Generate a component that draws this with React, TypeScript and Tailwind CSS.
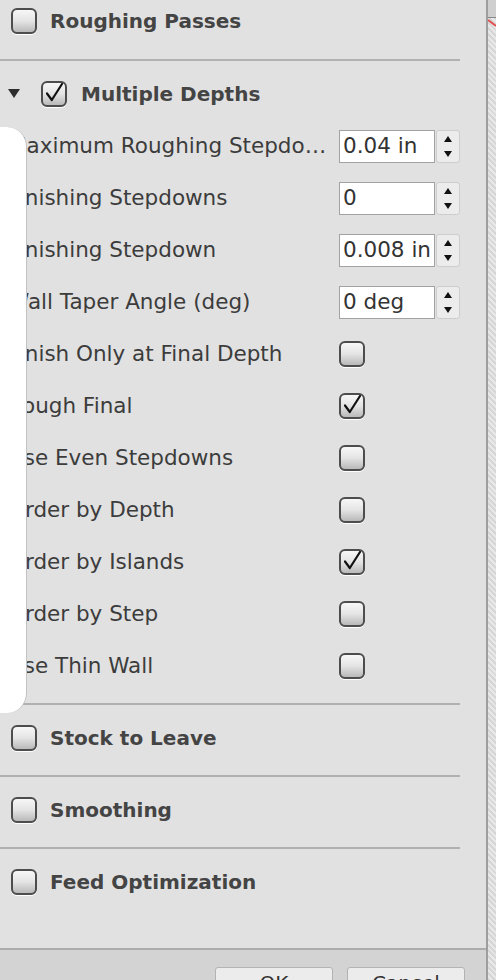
import { ReactNode } from 'react';

function Check({ checked = false }: { checked?: boolean }) {
  return (
    <span className="relative flex h-[26px] w-[26px] shrink-0 items-center justify-center rounded-[6px] border-2 border-[#4d4d4d] bg-linear-to-b from-[#f7f7f7] via-[#e4e4e4] to-[#b9b9b9] shadow-[0_1px_0_#ffffff]">
      {checked && (
        <svg viewBox="0 0 26 26" className="absolute left-[-2px] top-[-3px] h-[26px] w-[26px] overflow-visible">
          <path d="M6 13.5 L10.8 20 L21 4" fill="none" stroke="#111" strokeWidth="2.2" strokeLinecap="round" strokeLinejoin="round" />
        </svg>
      )}
    </span>
  );
}

function Line() {
  return <div className="h-[2px] w-[460px] shrink-0 bg-[#b1b1b1]" />;
}

function Spinner({ value }: { value: string }) {
  return (
    <div className="flex items-center gap-[1px]">
      <div className="flex h-[33px] w-[96px] items-center overflow-hidden border border-[#a2a2a2] bg-white pl-[3px] text-[21.5px] text-[#333]">
        {value}
      </div>
      <div className="flex h-[33px] w-[24px] flex-col items-center justify-between rounded-[3px] border border-[#cdcdcd] bg-[#ececec] py-[5px]">
        <svg viewBox="0 0 8 6" className="h-[6px] w-[8px]">
          <polygon points="4,0 8,6 0,6" fill="#111" />
        </svg>
        <svg viewBox="0 0 8 6" className="h-[6px] w-[8px]">
          <polygon points="0,0 8,0 4,6" fill="#111" />
        </svg>
      </div>
    </div>
  );
}

function Row({ label, children }: { label: string; children: ReactNode }) {
  return (
    <div className="flex h-[52px] items-center">
      <div className="w-[339px] shrink-0 pr-[8px]">
        <div className="truncate pl-[8px] text-[21.5px] text-[#3c3c3c]">{label}</div>
      </div>
      {children}
    </div>
  );
}

function Section({ label, grow = false }: { label: string; grow?: boolean }) {
  return (
    <div className={`flex items-start gap-[13px] pl-[11px] pt-[20px] ${grow ? 'flex-1' : 'h-[70px]'}`}>
      <Check />
      <span className="text-[20px] font-bold leading-[26px] text-[#444]">{label}</span>
    </div>
  );
}

const rows: { label: string; value?: string; checked?: boolean }[] = [
  { label: 'Maximum Roughing Stepdown', value: '0.04 in' },
  { label: 'Finishing Stepdowns', value: '0' },
  { label: 'Finishing Stepdown', value: '0.008 in' },
  { label: 'Wall Taper Angle (deg)', value: '0 deg' },
  { label: 'Finish Only at Final Depth', checked: false },
  { label: 'Rough Final', checked: true },
  { label: 'Use Even Stepdowns', checked: false },
  { label: 'Order by Depth', checked: false },
  { label: 'Order by Islands', checked: true },
  { label: 'Order by Step', checked: false },
  { label: 'Use Thin Wall', checked: false },
];

export default function App() {
  return (
    <div className="relative flex h-[980px] w-[496px] overflow-hidden bg-[#e1e1e1] font-['DejaVu_Sans',sans-serif]">
      {/* main panel */}
      <div className="flex w-[486px] shrink-0 flex-col">
        <div className="relative flex flex-1 flex-col">
          {/* Roughing Passes */}
          <div className="flex h-[59px] items-start gap-[13px] pl-[11px] pt-[8px]">
            <Check />
            <span className="text-[20px] font-bold leading-[26px] text-[#444]">Roughing Passes</span>
          </div>
          <Line />

          {/* Multiple Depths header */}
          <div className="flex h-[59px] items-end pb-[13px]">
            <svg viewBox="0 0 12 9" className="mb-[9px] ml-[8px] h-[9px] w-[12px]">
              <polygon points="0,0 12,0 6,9" fill="#2e2e2e" />
            </svg>
            <span className="ml-[21px]">
              <Check checked />
            </span>
            <span className="ml-[14px] text-[20px] font-bold leading-[26px] text-[#444]">Multiple Depths</span>
          </div>

          <div className="flex flex-col">
            {rows.map((r) => (
              <Row key={r.label} label={r.label}>
                {r.value !== undefined ? <Spinner value={r.value} /> : <Check checked={r.checked} />}
              </Row>
            ))}
          </div>
          <div className="h-[11px]" />
          <Line />
          <Section label="Stock to Leave" />
          <Line />
          <Section label="Smoothing" />
          <Line />
          <Section label="Feed Optimization" grow />

          {/* white side panel overlapping the labels */}
          <div className="absolute left-0 top-[127px] h-[586px] w-[27px] rounded-r-[20px] border-r border-[#c2c2c2] bg-white" />
        </div>

        {/* bottom button bar */}
        <div className="flex h-[32px] shrink-0 items-start border-t-2 border-[#acacac] bg-[#d3d3d3] pl-[215px] pt-[17px]">
          <div className="flex h-[30px] w-[118px] justify-center rounded-t-[3px] border border-[#b3b3b3] bg-[#ececec] pt-[5px] text-[20px] leading-[20px] text-[#333]">
            OK
          </div>
          <div className="ml-[14px] flex h-[30px] w-[118px] justify-center rounded-t-[3px] border border-[#b3b3b3] bg-[#ececec] pt-[5px] text-[20px] leading-[20px] text-[#333]">
            Cancel
          </div>
        </div>
      </div>

      {/* right edge */}
      <div className="w-[2px] shrink-0 bg-[#9e9e9e]" />
      <div className="relative w-[8px] shrink-0 bg-[repeating-linear-gradient(45deg,#d6d6d6_0px,#d6d6d6_2px,#e8e8e8_2px,#e8e8e8_4px)]">
        <div className="h-[18px] w-full border-b border-[#888] bg-[#cfcfcf]" />
        <svg viewBox="0 0 8 10" className="absolute left-0 top-[18px] h-[10px] w-[8px]">
          <path d="M0 2 L8 8" stroke="#e05050" strokeWidth="2" />
        </svg>
      </div>
    </div>
  );
}
